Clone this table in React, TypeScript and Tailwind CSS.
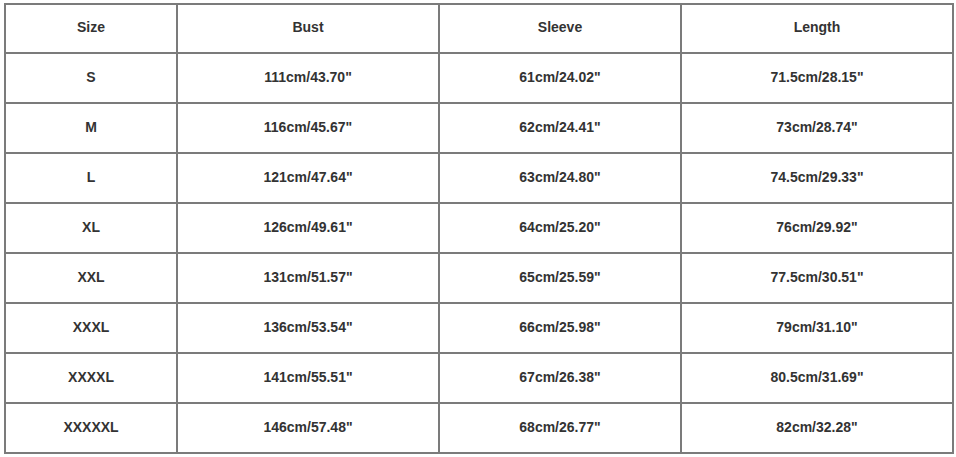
const rows = [
  ['S', '111cm/43.70"', '61cm/24.02"', '71.5cm/28.15"'],
  ['M', '116cm/45.67"', '62cm/24.41"', '73cm/28.74"'],
  ['L', '121cm/47.64"', '63cm/24.80"', '74.5cm/29.33"'],
  ['XL', '126cm/49.61"', '64cm/25.20"', '76cm/29.92"'],
  ['XXL', '131cm/51.57"', '65cm/25.59"', '77.5cm/30.51"'],
  ['XXXL', '136cm/53.54"', '66cm/25.98"', '79cm/31.10"'],
  ['XXXXL', '141cm/55.51"', '67cm/26.38"', '80.5cm/31.69"'],
  ['XXXXXL', '146cm/57.48"', '68cm/26.77"', '82cm/32.28"'],
];

const head = ['Size', 'Bust', 'Sleeve', 'Length'];

export default function App() {
  return (
    <div className="w-[956px] h-[457px] bg-white pl-[4px] pt-[3px] font-['Liberation_Sans',Arial,sans-serif]">
      <div className="grid grid-cols-[170px_260px_240px_270px] grid-rows-[47px_repeat(8,48px)] gap-[2px] p-[2px] bg-[#7b7b7b] w-[950px] text-[14px] font-bold text-[#333]">
        {head.map((h) => (
          <div key={h} className="bg-white flex items-center justify-center pb-[2px]">
            {h}
          </div>
        ))}
        {rows.map((r) =>
          r.map((c, i) => (
            <div key={r[0] + i} className="bg-white flex items-center justify-center pb-[2px]">
              {c}
            </div>
          ))
        )}
      </div>
    </div>
  );
}
